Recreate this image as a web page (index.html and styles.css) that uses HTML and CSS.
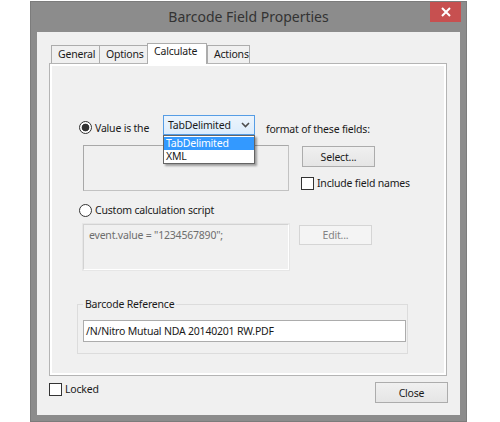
FILE: index.html
```html
<!DOCTYPE html>
<html>
<head>
<meta charset="utf-8">
<link rel="stylesheet" href="styles.css">
</head>
<body>
<div class="window">
  <div class="titlebar">
    <div class="title">Barcode Field Properties</div>
    <div class="close-x">
      <svg width="10" height="10" viewBox="0 0 10 10"><path d="M1 1 L9 9 M9 1 L1 9" stroke="#fff" stroke-width="2" fill="none"/></svg>
    </div>
  </div>
  <div class="client">
    <div class="tabs">
      <div class="tab t-general">General</div>
      <div class="tab t-options">Options</div>
      <div class="tab t-calc active">Calculate</div>
      <div class="tab t-actions">Actions</div>
    </div>
    <div class="panel">
      <div class="row row-value">
        <span class="radio checked"></span>
        <span class="lbl lbl-value">Value is the</span>
        <div class="combo">
          <span class="combo-text">TabDelimited</span>
          <svg class="chev" width="9" height="6" viewBox="0 0 9 6"><path d="M1 1 L4.5 4.5 L8 1" stroke="#4d4d4d" stroke-width="1.6" fill="none"/></svg>
          <ul class="dropdown">
            <li class="sel">TabDelimited</li>
            <li>XML</li>
          </ul>
        </div>
        <span class="lbl lbl-format">format of these fields:</span>
      </div>
      <div class="row row-fields">
        <div class="listbox"></div>
        <div class="side">
          <div class="btn btn-select">Select...</div>
          <div class="check check-include"><span class="box"></span><span>Include field names</span></div>
        </div>
      </div>
      <div class="row row-custom">
        <span class="radio"></span>
        <span class="lbl">Custom calculation script</span>
      </div>
      <div class="row row-script">
        <div class="scriptbox">event.value = "1234567890";</div>
        <div class="btn btn-edit disabled">Edit...</div>
      </div>
      <fieldset class="group">
        <legend>Barcode Reference</legend>
        <div class="input">/N/Nitro Mutual NDA 20140201 RW.PDF</div>
      </fieldset>
    </div>
    <div class="footer">
      <div class="check check-locked"><span class="box"></span><span>Locked</span></div>
      <div class="btn btn-close">Close</div>
    </div>
  </div>
</div>
</body>
</html>
```
FILE: styles.css
```css
html, body {
  margin: 0;
  padding: 0;
  background: #ffffff;
  height: 422px;
  overflow: hidden;
}
* { box-sizing: border-box; }

body {
  font-family: "Noto Sans", "Open Sans", sans-serif;
  font-size: 10.5px;
  letter-spacing: -0.2px;
  color: #1a1a1a;
}

.window {
  width: 437px;
  margin: 1px 0 0 30px;
  border: 1px solid #7c7c7c;
  background: #8c8c8c;
  padding: 0 6px 6px;
}

.titlebar {
  display: grid;
  height: 30px;
  margin: 0 -6px;
}
.title, .close-x { grid-area: 1 / 1; }
.title {
  justify-self: center;
  align-self: center;
  font-size: 14px;
  letter-spacing: 0;
  color: #333333;
  margin-top: -1px;
}
.close-x {
  justify-self: end;
  align-self: start;
  width: 31px;
  height: 20px;
  margin-right: 5px;
  background: #c75050;
  display: flex;
  align-items: center;
  justify-content: center;
}

.client {
  background: #f0f0f0;
  height: 383px;
  padding-top: 11px;
}

.tabs {
  display: flex;
  align-items: flex-end;
  height: 20px;
  margin-left: 14px;
  position: relative;
  z-index: 1;
}
.tab {
  height: 18px;
  border: 1px solid #acacac;
  border-bottom: none;
  border-right: none;
  background: #f0f0f0;
  line-height: 16px;
  padding-left: 6px;
  color: #1a1a1a;
}
.t-general { width: 48px; }
.t-options { width: 48px; }
.t-calc { width: 60px; }
.t-actions { width: 43px; border-right: 1px solid #acacac; }
.tab.active {
  height: 21px;
  margin-bottom: -1px;
  background: #ffffff;
  border-right: 1px solid #acacac;
  line-height: 15px;
  padding-left: 6px;
}

.panel {
  margin-left: 12px;
  width: 398px;
  height: 313px;
  border: 1px solid #b4b4b4;
  box-shadow: inset 0 0 0 2px #ffffff;
  padding: 51px 0 0 29px;
}

.row { display: flex; }

.radio {
  width: 13px;
  height: 13px;
  border: 1px solid #333333;
  border-radius: 50%;
  background: #ffffff;
  flex: none;
}
.radio.checked {
  background: radial-gradient(circle, #333333 0 3.5px, #ffffff 4.2px);
}

.lbl { line-height: 14px; }

.row-value { height: 20px; align-items: flex-start; }
.row-value .radio { margin-top: 6px; }
.lbl-value { width: 71px; padding-left: 3px; margin-top: 6px; }
.lbl-format { margin-left: 11px; margin-top: 7px; }

.combo {
  position: relative;
  width: 92px;
  height: 20px;
  border: 1px solid #569de5;
  background: linear-gradient(#ecf4fc, #dcecfc);
  display: flex;
  align-items: center;
  padding: 0 0 1px 4px;
}
.combo-text { flex: 1; line-height: 14px; }
.chev { margin-right: 4px; }

.dropdown {
  position: absolute;
  top: 19px;
  left: -1px;
  width: 92px;
  margin: 0;
  padding: 1px 0 0;
  list-style: none;
  background: #ffffff;
  border: 1px solid #646464;
  box-shadow: 2px 2px 2px rgba(0, 0, 0, 0.35);
  z-index: 5;
}
.dropdown li {
  height: 13px;
  line-height: 13px;
  padding-left: 2px;
}
.dropdown li.sel {
  background: #3399ff;
  color: #ffffff;
}

.row-fields { margin-top: 10px; }
.listbox {
  width: 206px;
  height: 46px;
  margin-left: 4px;
  border: 1px solid #a8a8a8;
  border-right-color: #c2c2c2;
  border-bottom-color: #c2c2c2;
  background: #f0f0f0;
}
.side {
  display: flex;
  flex-direction: column;
  margin-left: 12px;
}

.btn {
  width: 73px;
  height: 21px;
  border: 1px solid #acacac;
  background: linear-gradient(#f0f0f0, #e5e5e5);
  display: flex;
  align-items: center;
  justify-content: center;
  line-height: 14px;
  color: #1a1a1a;
}
.btn-select { margin: 1px 0 0 1px; }
.btn.disabled {
  height: 20px;
  border-color: #d5d5d5;
  background: #f4f4f4;
  color: #838383;
}

.check {
  display: flex;
  align-items: center;
  line-height: 14px;
}
.check .box {
  width: 13px;
  height: 13px;
  border: 1px solid #333333;
  background: #ffffff;
  margin-right: 3px;
  flex: none;
}
.check-include { margin-top: 9px; }

.row-custom { margin-top: 12px; align-items: center; }
.row-custom .lbl { padding-left: 3px; }

.row-script { margin-top: 7px; align-items: flex-start; }
.scriptbox {
  width: 206px;
  height: 46px;
  margin-left: 4px;
  border: 1px solid #d2d2d2;
  border-right-color: #ffffff;
  border-bottom-color: #ffffff;
  outline: 1px solid #e6e6e6;
  color: #6d6d6d;
  padding: 3px 5px;
  line-height: 14px;
}
.btn-edit { margin: 1px 0 0 10px; }

.group {
  width: 331px;
  margin: 27px 0 0 -2px;
  padding: 0 0 11px 5px;
  border: 1px solid #dcdcdc;
}
.group legend {
  margin-left: 0;
  padding: 0 2px;
  line-height: 14px;
}
.input {
  width: 323px;
  height: 22px;
  margin-top: 9px;
  border: 1px solid #acacac;
  background: #ffffff;
  padding: 0 0 0 2px;
  display: flex;
  align-items: center;
  line-height: 14px;
}

.footer {
  display: flex;
  justify-content: space-between;
  align-items: flex-start;
  margin: 6px 12px 0 12px;
}
.btn-close { width: 73px; height: 21px; }
```
